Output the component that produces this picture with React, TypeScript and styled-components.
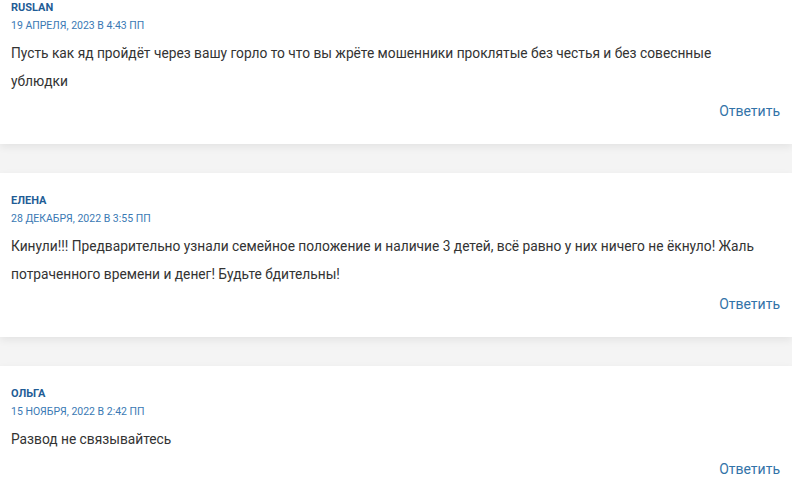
import React from 'react'
import styled, { createGlobalStyle } from 'styled-components'

const GlobalStyle = createGlobalStyle`
  body {
    margin: 0;
    background: #f4f4f4;
    font-family: Roboto, "Liberation Sans", Arial, sans-serif;
  }
`

const CommentList = styled.div`
  display: flex;
  flex-direction: column;
  gap: 29px;
  margin-top: -20px;
  background: #f4f4f4;
`

const CommentCard = styled.article`
  background: #fff;
  padding: 21px 12px 23px 11px;
  box-shadow: 0 3px 8px rgba(0, 0, 0, 0.07);
`

const Author = styled.div`
  font-size: 11px;
  font-weight: 700;
  line-height: 14px;
  text-transform: uppercase;
  color: #1f5d96;
`

const DateLine = styled.div`
  margin-top: 4px;
  font-size: 10.5px;
  line-height: 14px;
  text-transform: uppercase;
  color: #3a79b4;
`

const Body = styled.p`
  margin: 6px 0 0;
  padding-right: 12px;
  font-size: 13.75px;
  line-height: 28px;
  color: #333;
`

const ReplyRow = styled.div`
  display: flex;
  justify-content: flex-end;
  margin-top: 6px;
`

const ReplyLink = styled.a`
  font-size: 14px;
  line-height: 20px;
  color: #3373a8;
  text-decoration: none;
  cursor: pointer;
`

const comments = [
  {
    author: 'Ruslan',
    date: '19 апреля, 2023 в 4:43 пп',
    text: 'Пусть как яд пройдёт через вашу горло то что вы жрёте мошенники проклятые без честья и без совеснные ублюдки',
  },
  {
    author: 'Елена',
    date: '28 декабря, 2022 в 3:55 пп',
    text: 'Кинули!!! Предварительно узнали семейное положение и наличие 3 детей, всё равно у них ничего не ёкнуло! Жаль потраченного времени и денег! Будьте бдительны!',
  },
  {
    author: 'Ольга',
    date: '15 ноября, 2022 в 2:42 пп',
    text: 'Развод не связывайтесь',
  },
]

const App = () => {
  return (
    <>
      <GlobalStyle />
      <CommentList>
        {comments.map((c) => (
          <CommentCard key={c.author}>
            <Author>{c.author}</Author>
            <DateLine>{c.date}</DateLine>
            <Body>{c.text}</Body>
            <ReplyRow>
              <ReplyLink>Ответить</ReplyLink>
            </ReplyRow>
          </CommentCard>
        ))}
      </CommentList>
    </>
  )
}

export default App
